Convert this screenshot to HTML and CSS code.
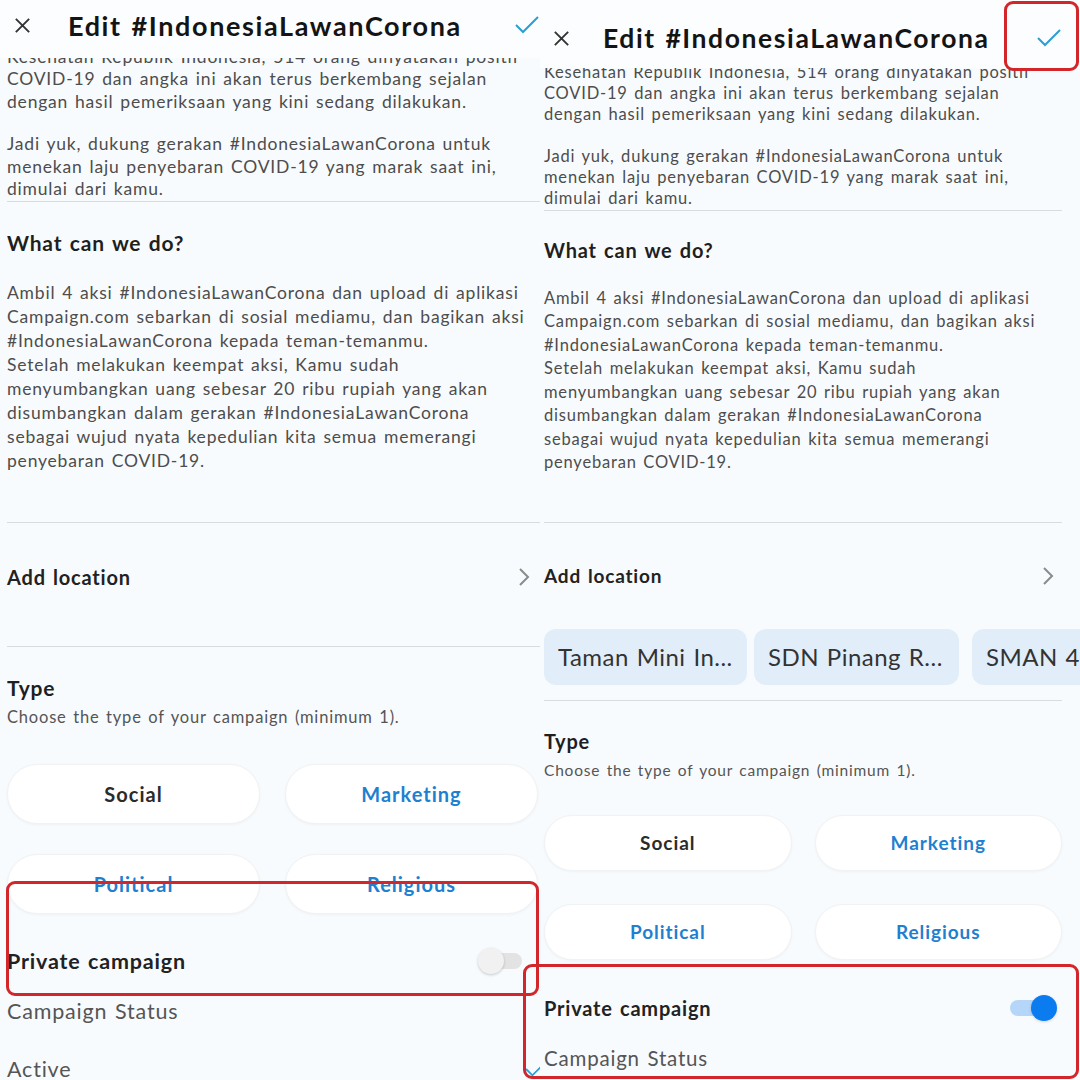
FILE: index.html
```html
<!DOCTYPE html>
<html lang="id">
  <head>
    <meta charset="UTF-8" />
    <meta name="viewport" content="width=device-width, initial-scale=1.0" />
    <title>Edit #IndonesiaLawanCorona</title>
    <link rel="stylesheet" href="styles.css">
  </head>
  <body>
    <div class="screens">
      <!-- before: location empty, private off -->
      <section class="panel panel-a">
        <header class="topbar">
          <svg class="icon-close" viewBox="0 0 20 20"><path d="M3 3 L17 17 M17 3 L3 17" /></svg>
          <h1>Edit #IndonesiaLawanCorona</h1>
          <svg class="icon-check" viewBox="0 0 26 20"><path d="M2 10 L9 17 L24 2" /></svg>
        </header>
        <div class="scroll">
          <p class="text first">Kesehatan Republik Indonesia, 514 orang dinyatakan positif<br>COVID-19 dan angka ini akan terus berkembang sejalan<br>dengan hasil pemeriksaan yang kini sedang dilakukan.</p>
          <p class="text gap">Jadi yuk, dukung gerakan #IndonesiaLawanCorona untuk<br>menekan laju penyebaran COVID-19 yang marak saat ini,<br>dimulai dari kamu.</p>
          <hr class="rule">
          <h2 class="section-title what">What can we do?</h2>
          <p class="text long">Ambil 4 aksi #IndonesiaLawanCorona dan upload di aplikasi<br>Campaign.com sebarkan di sosial mediamu, dan bagikan aksi<br>#IndonesiaLawanCorona kepada teman-temanmu.<br>Setelah melakukan keempat aksi, Kamu sudah<br>menyumbangkan uang sebesar 20 ribu rupiah yang akan<br>disumbangkan dalam gerakan #IndonesiaLawanCorona<br>sebagai wujud nyata kepedulian kita semua memerangi<br>penyebaran COVID-19.</p>
          <hr class="rule">
          <div class="row location">
            <span class="row-label">Add location</span>
            <svg class="icon-chevron" viewBox="0 0 12 20"><path d="M2 2 L10 10 L2 18" /></svg>
          </div>
          <hr class="rule">
          <h2 class="section-title type">Type</h2>
          <p class="hint">Choose the type of your campaign (minimum 1).</p>
          <div class="types">
            <button class="pill">Social</button>
            <button class="pill blue">Marketing</button>
            <button class="pill blue">Political</button>
            <button class="pill blue">Religious</button>
          </div>
          <div class="row private">
            <span class="row-label">Private campaign</span>
            <span class="toggle"><span class="knob"></span></span>
          </div>
          <p class="status">Campaign Status</p>
          <div class="row active">
            <span class="status-value">Active</span>
            <svg class="icon-tick" viewBox="0 0 26 20"><path d="M2 10 L9 17 L24 2" /></svg>
          </div>
        </div>
      </section>

      <!-- after: locations added, private on -->
      <section class="panel panel-b">
        <header class="topbar">
          <svg class="icon-close" viewBox="0 0 20 20"><path d="M3 3 L17 17 M17 3 L3 17" /></svg>
          <h1>Edit #IndonesiaLawanCorona</h1>
          <svg class="icon-check" viewBox="0 0 26 20"><path d="M2 10 L9 17 L24 2" /></svg>
        </header>
        <div class="scroll">
          <p class="text first">Kesehatan Republik Indonesia, 514 orang dinyatakan positif<br>COVID-19 dan angka ini akan terus berkembang sejalan<br>dengan hasil pemeriksaan yang kini sedang dilakukan.</p>
          <p class="text gap">Jadi yuk, dukung gerakan #IndonesiaLawanCorona untuk<br>menekan laju penyebaran COVID-19 yang marak saat ini,<br>dimulai dari kamu.</p>
          <hr class="rule">
          <h2 class="section-title what">What can we do?</h2>
          <p class="text long">Ambil 4 aksi #IndonesiaLawanCorona dan upload di aplikasi<br>Campaign.com sebarkan di sosial mediamu, dan bagikan aksi<br>#IndonesiaLawanCorona kepada teman-temanmu.<br>Setelah melakukan keempat aksi, Kamu sudah<br>menyumbangkan uang sebesar 20 ribu rupiah yang akan<br>disumbangkan dalam gerakan #IndonesiaLawanCorona<br>sebagai wujud nyata kepedulian kita semua memerangi<br>penyebaran COVID-19.</p>
          <hr class="rule">
          <div class="row location">
            <span class="row-label">Add location</span>
            <svg class="icon-chevron" viewBox="0 0 12 20"><path d="M2 2 L10 10 L2 18" /></svg>
          </div>
          <div class="chips">
            <span class="chip">Taman Mini In...</span>
            <span class="chip">SDN Pinang R...</span>
            <span class="chip">SMAN 4 Jakarta</span>
          </div>
          <hr class="rule">
          <h2 class="section-title type">Type</h2>
          <p class="hint">Choose the type of your campaign (minimum 1).</p>
          <div class="types">
            <button class="pill">Social</button>
            <button class="pill blue">Marketing</button>
            <button class="pill blue">Political</button>
            <button class="pill blue">Religious</button>
          </div>
          <div class="row private">
            <span class="row-label">Private campaign</span>
            <span class="toggle on"><span class="knob"></span></span>
          </div>
          <p class="status">Campaign Status</p>
        </div>
      </section>

      <!-- red annotation boxes -->
      <div class="mark mark-private-a"></div>
      <div class="mark mark-check-b"></div>
      <div class="mark mark-private-b"></div>
    </div>
  </body>
</html>
```

FILE: styles.css
```css
* {
  box-sizing: border-box;
}
html,
body {
  margin: 0;
  padding: 0;
}
body {
  font-family: Lato, "Open Sans", Arial, sans-serif;
  color: #444;
  background-color: #f8fbfd;
  letter-spacing: 0.05em;
  word-spacing: 0.1em;
}
.screens {
  position: relative;
  display: flex;
  width: 1080px;
  height: 1080px;
  overflow: hidden;
}
.panel {
  width: 540px;
  height: 1080px;
  display: flex;
  flex-direction: column;
  overflow: hidden;
  background-color: #f8fbfd;
}

/* top bar */
.topbar {
  display: flex;
  align-items: center;
  flex-shrink: 0;
  position: relative;
  z-index: 1;
  background-color: #fcfdfe;
}
.topbar h1 {
  margin: 0;
  font-weight: 700;
  color: #141414;
  white-space: nowrap;
  letter-spacing: 0.06em;
}
.topbar .icon-check {
  margin-left: auto;
}
.icon-close {
  fill: none;
  stroke: #333;
  stroke-width: 2;
}
.icon-check,
.icon-tick {
  fill: none;
  stroke: #2a9ed6;
  stroke-width: 2;
}

.scroll {
  flex: 1;
  overflow: hidden;
}
.text {
  margin: 0;
  white-space: nowrap;
  color: #4d4d4d;
}
.rule {
  margin: 0;
  border: 0;
  border-top: 1.5px solid #d9dcde;
}
.section-title {
  margin: 0;
  font-weight: 700;
  color: #1f1f1f;
}
.row {
  display: flex;
  align-items: center;
  justify-content: space-between;
}
.row-label {
  font-weight: 700;
  color: #222;
}
.icon-chevron {
  fill: none;
  stroke: #8a8a8a;
  stroke-width: 2;
}
.hint {
  margin: 0;
  color: #555;
  white-space: nowrap;
}
.types {
  display: grid;
  grid-template-columns: 1fr 1fr;
}
.pill {
  font-family: inherit;
  font-weight: 700;
  color: #2b2b2b;
  background-color: #fff;
  border: 1px solid #f0f2f3;
  border-radius: 32px;
  box-shadow: 0 1px 3px rgba(0, 0, 0, 0.04);
  letter-spacing: 0.05em;
}
.pill.blue {
  color: #1f7fd0;
}
.toggle {
  position: relative;
  display: block;
  width: 40px;
  height: 16px;
  border-radius: 8px;
  background-color: #e3e3e3;
}
.toggle .knob {
  position: absolute;
  top: -5px;
  left: -4px;
  width: 26px;
  height: 26px;
  border-radius: 50%;
  background-color: #f1f1f1;
  box-shadow: 0 1px 3px rgba(0, 0, 0, 0.2);
}
.toggle.on {
  background-color: #b5d6f8;
}
.toggle.on .knob {
  left: auto;
  right: -7px;
  background-color: #0b7bf0;
  box-shadow: 0 1px 3px rgba(0, 0, 0, 0.15);
}
.status {
  margin: 0;
  color: #555;
}
.status-value {
  color: #555;
}

/* left screen */
.panel-a .topbar {
  height: 58px;
  padding: 0 0 8px 13px;
}
.panel-a .scroll {
  padding-left: 7px;
}
.panel-a .icon-close {
  width: 19px;
  height: 19px;
  margin-right: 36px;
}
.panel-a .topbar h1 {
  font-size: 27px;
}
.panel-a .icon-check {
  width: 26px;
  height: 20px;
}
.panel-a .text {
  font-size: 17.5px;
  line-height: 22.5px;
}
.panel-a .text.first {
  margin-top: -12.5px;
}
.panel-a .text.gap {
  margin-top: 20px;
}
.panel-a .section-title {
  font-size: 21px;
  line-height: 26px;
}
.panel-a .what {
  margin-top: 28px;
}
.panel-a .text.long {
  margin-top: 25px;
  margin-bottom: 49px;
  line-height: 24px;
}
.panel-a .row-label {
  font-size: 20px;
}
.panel-a .location {
  height: 54px;
  margin-top: 27px;
  margin-bottom: 42px;
  padding-right: 10px;
}
.panel-a .icon-chevron {
  width: 12px;
  height: 20px;
}
.panel-a .type {
  margin-top: 28px;
}
.panel-a .hint {
  margin-top: 6px;
  font-size: 16.5px;
  line-height: 20px;
}
.panel-a .types {
  margin-top: 37px;
  margin-right: 2px;
  column-gap: 25px;
  row-gap: 30px;
}
.panel-a .pill {
  height: 60px;
  font-size: 20px;
}
.panel-a .private {
  margin-top: 34px;
  height: 26px;
  padding-right: 18px;
}
.panel-a .private .row-label {
  font-size: 21.5px;
}
.panel-a .status {
  margin-top: 24px;
  font-size: 21.5px;
  line-height: 26px;
}
.panel-a .active {
  margin-top: 32px;
  height: 26px;
  margin-right: -8px;
}
.panel-a .status-value {
  font-size: 21.5px;
}
.panel-a .icon-tick {
  width: 24px;
  height: 18px;
}

/* right screen */
.panel-b .topbar {
  height: 68px;
  padding: 8px 18px 0 12px;
}
.panel-b .scroll {
  padding: 0 18px 0 4px;
}
.panel-b .icon-close {
  width: 19px;
  height: 19px;
  margin-right: 32px;
}
.panel-b .topbar h1 {
  font-size: 26.5px;
}
.panel-b .icon-check {
  width: 26px;
  height: 20px;
}
.panel-b .text {
  font-size: 16.5px;
  line-height: 21px;
}
.panel-b .text.first {
  margin-top: -6.5px;
}
.panel-b .text.gap {
  margin-top: 21px;
  margin-bottom: 1px;
}
.panel-b .section-title {
  font-size: 20px;
  line-height: 24px;
}
.panel-b .what {
  margin-top: 27px;
}
.panel-b .text.long {
  margin-top: 25px;
  margin-bottom: 47px;
  line-height: 23.5px;
}
.panel-b .row-label {
  font-size: 19px;
}
.panel-b .location {
  height: 54px;
  margin-top: 26px;
  padding-right: 8px;
}
.panel-b .icon-chevron {
  width: 12px;
  height: 20px;
}
.chips {
  display: flex;
  gap: 7px;
  margin: 26px -18px 15px 0;
  overflow: hidden;
}
.chip {
  flex-shrink: 0;
  display: flex;
  align-items: center;
  height: 56px;
  padding: 0 14px;
  border-radius: 12px;
  background-color: #e1eefa;
  color: #333;
  font-size: 24px;
  letter-spacing: 0.02em;
  word-spacing: 0.05em;
  white-space: nowrap;
}
.chip:nth-child(1) {
  width: 203px;
}
.chip:nth-child(2) {
  width: 205px;
  margin-right: 6px;
}
.panel-b .type {
  margin-top: 28px;
}
.panel-b .hint {
  margin-top: 8px;
  font-size: 15.5px;
  line-height: 19px;
}
.panel-b .types {
  margin-top: 35px;
  column-gap: 23px;
  row-gap: 33px;
}
.panel-b .pill {
  height: 56px;
  font-size: 19px;
}
.panel-b .private {
  margin-top: 36px;
  height: 24px;
  padding-right: 12px;
}
.panel-b .private .row-label {
  font-size: 20px;
}
.panel-b .status {
  margin-top: 26px;
  font-size: 20.5px;
  line-height: 24px;
}

/* annotations */
.mark {
  position: absolute;
  border: 3.5px solid #d3262b;
  border-radius: 9px;
  z-index: 5;
}
.mark-private-a {
  left: 6px;
  top: 881px;
  width: 533px;
  height: 115px;
}
.mark-check-b {
  left: 1004px;
  top: 1px;
  width: 75px;
  height: 70px;
}
.mark-private-b {
  left: 523px;
  top: 964px;
  width: 556px;
  height: 115px;
}
```
